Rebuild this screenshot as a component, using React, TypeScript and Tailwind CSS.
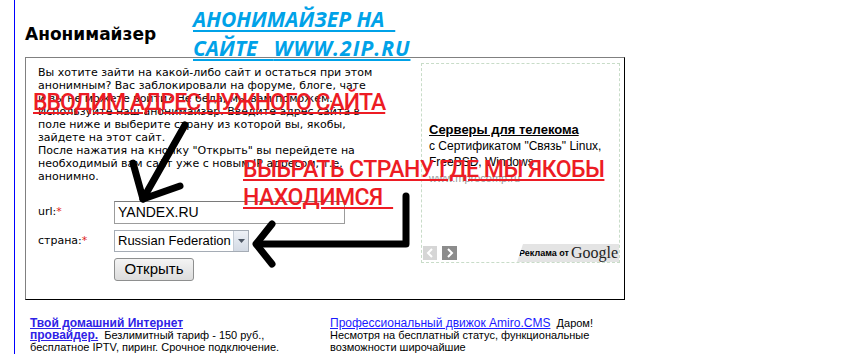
const verdana = "font-['DejaVu_Sans',Verdana,sans-serif]";
const arial = "font-['Liberation_Sans',Arial,sans-serif]";

function AdBlock() {
  return (
    <div className={`relative mt-[5px] flex h-[200px] w-[199px] flex-col border border-dashed border-[#c8dcc8] ${arial}`}>
      <div className="pl-[7px] pt-[58px] text-[12px] leading-[16px] text-black">
        <div className="text-[13px] font-bold underline">Серверы для телекома</div>
        <div>с Сертификатом "Связь" Linux,</div>
        <div>FreeBSD, Windows</div>
        <div className="text-[11px] text-[#9a9a9a]">www.mprocomp.ru</div>
      </div>
      <div className="mt-auto flex items-end justify-between">
        <div className="mb-[2px] ml-[1px] flex gap-[5px]">
          <div className="flex h-[14px] w-[14px] items-center justify-center bg-[#d6d6d6]">
            <svg width="8" height="10" viewBox="0 0 8 10">
              <polyline points="6,1 2,5 6,9" fill="none" stroke="#fff" strokeWidth="2" />
            </svg>
          </div>
          <div className="flex h-[14px] w-[15px] items-center justify-center bg-[#8c8c8c]">
            <svg width="8" height="10" viewBox="0 0 8 10">
              <polyline points="2,1 6,5 2,9" fill="none" stroke="#fff" strokeWidth="2" />
            </svg>
          </div>
        </div>
        <div className="flex h-[18px] w-[102px] items-center justify-end gap-[2px] whitespace-nowrap bg-[#e4e4e4] pr-[1px] [clip-path:polygon(6px_0,100%_0,100%_100%,0_100%)]">
          <span className="text-[9px] font-bold leading-none text-black">Реклама от</span>
          <span className="font-['Liberation_Serif',serif] text-[16px] leading-none text-[#222]">Google</span>
        </div>
      </div>
    </div>
  );
}

function Overlays() {
  return (
    <>
      <div className="pointer-events-none absolute left-[193px] top-[5px] font-['Open_Sans',sans-serif] text-[21px] font-bold italic leading-[29px] text-[#00a2e8] underline decoration-[#00a2e8] decoration-2 underline-offset-[3px]">
        <div>АНОНИМАЙЗЕР НА&nbsp;&nbsp;</div>
        <div>
          САЙТЕ&nbsp;&nbsp; <span className="tracking-[1px]">WWW.2IP.RU</span>
        </div>
      </div>
      <div className="pointer-events-none absolute left-[33px] top-[89px] font-['Roboto',sans-serif] text-[23px] font-medium leading-[28px] tracking-[-1px] text-[#ed1c24] underline decoration-[#ed1c24] decoration-2 underline-offset-[2px]">
        ВВОДИМ АДРЕС НУЖНОГО САЙТА
      </div>
      <div className="pointer-events-none absolute left-[243px] top-[156px] font-['Roboto',sans-serif] text-[23px] font-medium leading-[28px] tracking-[-0.5px] text-[#ed1c24] underline decoration-[#ed1c24] decoration-2 underline-offset-[2px]">
        <div>ВЫБРАТЬ СТРАНУ ГДЕ МЫ ЯКОБЫ</div>
        <div>НАХОДИМСЯ&nbsp;&nbsp;</div>
      </div>
      <svg className="pointer-events-none absolute left-0 top-0" width="863" height="354" viewBox="0 0 863 354">
        <g fill="none" stroke="#000" strokeWidth="7" strokeLinecap="round" strokeLinejoin="round">
          <polyline points="185,125 143,199" />
          <polyline points="133,163 143,199 180,186" />
          <polyline points="406,196 406,244 257,244" />
          <polyline points="272,224 256,244 272,264" />
        </g>
      </svg>
    </>
  );
}

export default function App() {
  return (
    <div className="relative h-[354px] w-[863px] overflow-hidden bg-white text-black">
      <div className="ml-[14px] h-full border-l border-[#0000ff] pl-[10px]">
        <h1 className={`pt-[25px] text-[17px] font-bold leading-[19px] ${verdana}`}>Анонимайзер</h1>

        <div className="mt-[13px] flex h-[243px] w-[600px] border border-b-black border-l-[#808080] border-r-black border-t-[#808080]">
          <div className="w-[395px] pl-[12px] pt-[8px]">
            <p className={`text-[11px] leading-[13px] ${verdana}`}>
              Вы хотите зайти на какой-либо сайт и остаться при этом
              <br />
              анонимным? Вас заблокировали на форуме, блоге, чате
              <br />
              и вы не можете войти? Не беда, мы вам поможем.
              <br />
              Используйте наш анонимайзер. Введите адрес сайта в
              <br />
              поле ниже и выберите страну из которой вы, якобы,
              <br />
              зайдете на этот сайт.
              <br />
              После нажатия на кнопку "Открыть" вы перейдете на
              <br />
              необходимый вам сайт уже с новым IP адресом, т.е.
              <br />
              анонимно.
            </p>

            <div className="mt-[18px] flex flex-col gap-[6px]">
              <div className="flex items-center">
                <span className={`w-[76px] text-[11px] ${verdana}`}>
                  url:<span className="text-[#e02020]">*</span>
                </span>
                <div className={`flex h-[23px] w-[231px] items-center border border-[#9c9c9c] border-t-[#7a7a7a] px-[3px] text-[14px] ${arial}`}>
                  YANDEX.RU
                </div>
              </div>
              <div className="flex items-center">
                <span className={`w-[76px] text-[11px] ${verdana}`}>
                  страна:<span className="text-[#e02020]">*</span>
                </span>
                <div className={`flex h-[22px] w-[135px] items-center border border-[#a5acb5] text-[13px] ${arial}`}>
                  <span className="flex-1 pl-[3px]">Russian Federation</span>
                  <span className="flex h-full w-[15px] items-center justify-center border-l border-[#c5ccd5] bg-gradient-to-b from-[#eef1f6] to-[#d3dae4]">
                    <svg width="7" height="4" viewBox="0 0 7 4">
                      <polygon points="0,0 7,0 3.5,4" fill="#4d5663" />
                    </svg>
                  </span>
                </div>
              </div>
              <div className="pl-[76px]">
                <button className={`flex h-[23px] w-[80px] items-center justify-center rounded-[3px] border border-[#8e8f8f] bg-gradient-to-b from-[#f4f4f4] to-[#dcdcdc] text-[15px] ${arial}`}>
                  Открыть
                </button>
              </div>
            </div>
          </div>
          <AdBlock />
        </div>

        <div className={`ml-[5px] mt-[17px] flex text-[11px] leading-[12px] ${arial}`}>
          <div className="w-[300px]">
            <a className="text-[12px] font-bold text-[#2f22e6] underline">Твой домашний Интернет</a>
            <br />
            <a className="text-[12px] font-bold text-[#2f22e6] underline">провайдер.</a>
            &nbsp; Безлимитный тариф - 150 руб.,
            <br />
            бесплатное IPTV, пиринг. Срочное подключение.
          </div>
          <div>
            <a className="text-[12px] text-[#1a1aff] underline">Профессиональный движок Amiro.CMS</a>
            &nbsp; Даром!
            <br />
            Несмотря на бесплатный статус, функциональные
            <br />
            возможности широчайшие
          </div>
        </div>
      </div>
      <Overlays />
    </div>
  );
}
